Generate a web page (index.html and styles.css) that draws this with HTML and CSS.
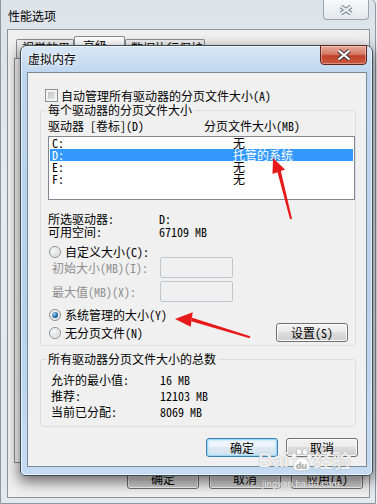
FILE: index.html
```html
<!DOCTYPE html>
<html lang="zh-CN">
<head>
    <meta charset="UTF-8">
    <meta name="viewport" content="width=device-width, initial-scale=1.0">
    <title>虚拟内存</title>
    <link rel="stylesheet" href="styles.css">
</head>
<body>
    <div class="window perf">
        <div class="titlebar">
            <span class="title">性能选项</span>
            <div class="close plain">
                <svg width="14" height="10" viewBox="0 0 14 10">
                    <path class="x-edge" d="M2 1.5 L12 8.5 M12 1.5 L2 8.5"/>
                    <path class="x-fill light" d="M2 1.5 L12 8.5 M12 1.5 L2 8.5"/>
                </svg>
            </div>
        </div>
        <div class="client">
            <div class="tabs">
                <div class="tab tab-visual">视觉效果</div>
                <div class="tab active tab-adv">高级</div>
                <div class="tab tab-dep">数据执行保护</div>
            </div>
            <div class="tab-page"></div>
            <div class="footer">
                <button class="btn">确定</button>
                <button class="btn">取消</button>
                <button class="btn">应用(A)</button>
            </div>
        </div>
    </div>

    <div class="window dialog">
        <div class="titlebar">
            <span class="title">虚拟内存</span>
            <div class="close red">
                <svg width="16" height="12" viewBox="0 0 16 12">
                    <path class="x-edge" d="M2.5 1.5 L13.5 10.5 M13.5 1.5 L2.5 10.5"/>
                    <path class="x-fill" d="M2.5 1.5 L13.5 10.5 M13.5 1.5 L2.5 10.5"/>
                </svg>
            </div>
        </div>
        <div class="client">
            <label class="check-row"><span class="checkbox"></span>自动管理所有驱动器的分页文件大小(A)</label>

            <fieldset class="group first">
                <legend>每个驱动器的分页文件大小</legend>
                <div class="list-head">
                    <span class="head-drive">驱动器 [卷标](D)</span>
                    <span>分页文件大小(MB)</span>
                </div>
                <div class="listbox">
                    <div class="item"><span class="item-drive">C:</span><span>无</span></div>
                    <div class="item selected"><span class="item-drive">D:</span><span>托管的系统</span></div>
                    <div class="item"><span class="item-drive">E:</span><span>无</span></div>
                    <div class="item"><span class="item-drive">F:</span><span>无</span></div>
                </div>
                <div class="info first-info"><span class="info-key">所选驱动器:</span><span>D:</span></div>
                <div class="info"><span class="info-key">可用空间:</span><span>67109 MB</span></div>

                <div class="radio-row custom"><span class="radio"></span>自定义大小(C):</div>
                <div class="field-row first-field">
                    <span class="field-label">初始大小(MB)(I):</span>
                    <span class="input"></span>
                </div>
                <div class="field-row">
                    <span class="field-label">最大值(MB)(X):</span>
                    <span class="input"></span>
                </div>
                <div class="radio-row system"><span class="radio checked"></span>系统管理的大小(Y)</div>
                <div class="radio-row none">
                    <span class="radio"></span>无分页文件(N)
                    <button class="btn set">设置(S)</button>
                </div>
            </fieldset>

            <fieldset class="group second">
                <legend>所有驱动器分页文件大小的总数</legend>
                <div class="totals">
                    <div class="total"><span class="total-key">允许的最小值:</span><span>16 MB</span></div>
                    <div class="total"><span class="total-key">推荐:</span><span>12103 MB</span></div>
                    <div class="total"><span class="total-key">当前已分配:</span><span>8069 MB</span></div>
                </div>
            </fieldset>

            <div class="dialog-buttons">
                <button class="btn default">确定</button>
                <button class="btn">取消</button>
            </div>
        </div>
    </div>

    <svg class="arrows" width="377" height="504" viewBox="0 0 377 504">
        <polygon points="273,158 285,169.5 272.5,174" />
        <polygon points="277.3,171.4 280.7,170.6 292,218.8 290,219.2" />
        <polygon points="175,319 192.7,312.3 190.7,326.7" />
        <polygon points="192.2,317.8 250.3,336.3 249.7,338.3 191.2,321.2" />
    </svg>

    <div class="watermark">
        <div class="wm-logo">
            <span class="wm-bai">Bai</span>
            <svg class="wm-paw" width="24" height="24" viewBox="0 0 24 24">
                <ellipse cx="5" cy="8" rx="2.6" ry="3.2"/>
                <ellipse cx="10" cy="3.8" rx="2.6" ry="3.2"/>
                <ellipse cx="16" cy="4" rx="2.6" ry="3.2"/>
                <ellipse cx="20.5" cy="9" rx="2.6" ry="3.2"/>
                <path d="M12.5 9.5 C8 9.5 4 15 4 19 C4 22 7 23 12.5 23 C18 23 21 22 21 19 C21 15 17 9.5 12.5 9.5 Z"/>
                <text x="12.5" y="20.5" text-anchor="middle">du</text>
            </svg>
            <span class="wm-jy">经验</span>
        </div>
        <div class="wm-url">jingyan.baidu.com</div>
    </div>
</body>
</html>
```

FILE: styles.css
```css
* {
    box-sizing: border-box;
}

body {
    margin: 0;
    width: 377px;
    height: 504px;
    overflow: hidden;
    position: relative;
    background: #eef2f5;
    font-family: "Noto Sans CJK SC", sans-serif;
    font-size: 12px;
    line-height: 12px;
    color: #000;
    font-feature-settings: "hwid";
}

.window {
    position: absolute;
    display: flex;
    flex-direction: column;
}

.titlebar {
    display: flex;
    align-items: flex-start;
    flex-shrink: 0;
}

.close {
    display: flex;
    align-items: center;
    justify-content: center;
    width: 46px;
    height: 20px;
    border-radius: 0 0 4px 4px;
}

.x-edge {
    fill: none;
    stroke: #4a3a36;
    stroke-width: 4.2;
}

.x-fill {
    fill: none;
    stroke: #fff;
    stroke-width: 2.2;
}

.x-fill.light {
    stroke: #e9edf0;
}

.plain .x-edge {
    stroke: #6f7a84;
}

/* outer window: 性能选项 */
.perf {
    left: 0;
    top: -2px;
    width: 376px;
    height: 506px;
    padding: 0 5px 5px 6px;
    border: 1px solid #8b97a3;
    border-radius: 0 7px 0 0;
    background: linear-gradient(to bottom, #dce3e9, #e8ecf0 40%, #e4e9ee);
}

.perf .titlebar {
    height: 30px;
}

.perf .title {
    margin: 11px 0 0 1px;
}

.close.plain {
    margin: 1px 1px 0 auto;
    border: 1px solid #9aa4ae;
    border-top: none;
    background: linear-gradient(to bottom, #f7f9fb, #e4e8ec);
}

.perf .client {
    flex: 1;
    display: flex;
    flex-direction: column;
    border: 1px solid #8f9498;
    background: #f0f0f0;
}

.tabs {
    display: flex;
    align-items: flex-end;
    height: 28px;
    padding: 6px 0 0 8px;
    flex-shrink: 0;
}

.tab {
    height: 19px;
    padding: 2px 0 0 5px;
    border: 1px solid #898c95;
    border-bottom: none;
    border-radius: 2px 2px 0 0;
    background: linear-gradient(to bottom, #f3f3f3, #e2e2e2);
}

.tab.active {
    height: 22px;
    padding: 3px 0 0 8px;
    background: #fff;
}

.tab-visual { width: 58px; }
.tab-adv { width: 51px; }
.tab-dep { width: 80px; }

.tab-page {
    flex: 1;
    margin: 0 6px;
    border: 1px solid #898c95;
    background: #fbfbfb;
}

.footer {
    display: flex;
    justify-content: flex-end;
    gap: 10px;
    padding: 5px 6px 8px 0;
    flex-shrink: 0;
}

.footer .btn {
    height: 21px;
}

/* dialog: 虚拟内存 */
.dialog {
    left: 20px;
    top: 45px;
    width: 353px;
    height: 431px;
    padding: 0 5px 8px 6px;
    border: 1px solid #3f4b57;
    border-radius: 7px 7px 5px 5px;
    background: linear-gradient(to bottom, #d8e7f6 0, #bed6ef 26px, #b8d2ee 60%, #c4dbf2 100%);
    box-shadow: 0 5px 14px 1px rgba(0, 0, 0, 0.55), inset 0 0 0 1px rgba(255, 255, 255, 0.65);
}

.dialog .titlebar {
    height: 26px;
}

.dialog .title {
    margin: 7px 0 0 1px;
    text-shadow: 0 0 6px #fff, 0 0 3px #fff;
}

.close.red {
    margin: -1px 0 0 auto;
    width: 47px;
    border: 1px solid #5d251d;
    background: linear-gradient(to bottom, #e9a99a 0%, #d67a66 45%, #c1412b 55%, #cc5a3f 100%);
    box-shadow: inset 0 0 0 1px rgba(255, 255, 255, 0.35);
}

.dialog .client {
    flex: 1;
    border: 1px solid #7c8894;
    background: #f0f0f0;
}

.check-row {
    display: flex;
    align-items: center;
    gap: 3px;
    height: 13px;
    margin: 16px 0 0 17px;
}

.checkbox {
    width: 13px;
    height: 13px;
    flex-shrink: 0;
    border: 1px solid #8e8f8f;
    background: linear-gradient(135deg, #b6bbc1, #eeeeee);
    box-shadow: inset 0 0 0 2px #f4f4f4;
}

.group {
    margin: 0 0 0 12px;
    width: 316px;
    min-inline-size: 0;
    padding: 0 0 3px 7px;
    border: 1px solid #d5dfe5;
    border-radius: 3px;
}

.group legend {
    margin-left: -2px;
    padding: 0 2px;
    line-height: 12px;
}

.group.first {
    margin-top: 2px;
}

.group.second {
    margin-top: 7px;
    padding-bottom: 6px;
}

.list-head {
    display: flex;
    height: 12px;
    margin-top: 4px;
}

.head-drive {
    width: 156px;
}

.listbox {
    width: 307px;
    height: 64px;
    margin-top: 4px;
    padding: 0 1px;
    border: 1px solid #828790;
    background: #fff;
}

.item {
    display: flex;
    height: 12px;
    padding-left: 2px;
}

.item-drive {
    width: 181px;
}

.item.selected {
    background: #3399ff;
    color: #fff;
}

.info {
    display: flex;
    height: 13px;
    line-height: 13px;
}

.info.first-info {
    margin-top: 12px;
}

.info-key {
    width: 111px;
}

.radio-row {
    display: flex;
    align-items: center;
    gap: 4px;
    height: 12px;
    padding-left: 1px;
}

.radio-row.custom {
    margin-top: 8px;
}

.radio-row.system {
    margin-top: 7px;
}

.radio-row.none {
    height: 19px;
    margin-top: 2px;
}

.radio {
    display: flex;
    align-items: center;
    justify-content: center;
    width: 12px;
    height: 12px;
    flex-shrink: 0;
    border: 1px solid #8e8f8f;
    border-radius: 50%;
    background: radial-gradient(circle at 35% 35%, #fafafa, #cfd2d6 85%);
    box-shadow: inset 0 0 0 1px #f6f6f6;
}

.radio.checked::after {
    content: "";
    width: 6px;
    height: 6px;
    border-radius: 50%;
    background: radial-gradient(circle at 35% 35%, #a6dcf8, #1e6aa8 55%, #0d3d6a);
}

.field-row {
    display: flex;
    align-items: center;
    height: 21px;
    margin-top: 3px;
    padding-left: 4px;
    color: #8d8d8d;
}

.field-row.first-field {
    margin-top: -1px;
}

.field-label {
    width: 108px;
}

.input {
    width: 73px;
    height: 21px;
    border: 1px solid #c2c6ca;
    border-radius: 2px;
    background: #f0f0f0;
}

.btn {
    width: 72px;
    height: 19px;
    padding: 0;
    font: inherit;
    line-height: 12px;
    color: #000;
    border: 1px solid #707070;
    border-radius: 3px;
    background: linear-gradient(to bottom, #f2f2f2 0%, #ebebeb 49%, #dddddd 50%, #cfcfcf 100%);
    box-shadow: inset 0 0 0 1px #fcfcfc;
}

.btn.set {
    margin: 0 7px 0 auto;
}

.btn.default {
    border-color: #3c7fb1;
    background: linear-gradient(to bottom, #f3f9fd 0%, #eaf3f9 49%, #dde9f1 50%, #d2e2ec 100%);
    box-shadow: inset 0 0 0 1px #9fd8f6, inset 0 0 2px 2px rgba(190, 230, 250, 0.7);
}

.totals {
    margin-top: 7px;
    padding-left: 3px;
}

.total {
    display: flex;
    height: 16px;
    line-height: 16px;
}

.total-key {
    width: 109px;
}

.dialog-buttons {
    display: flex;
    justify-content: flex-end;
    gap: 8px;
    margin-top: 11px;
    padding-right: 8px;
}

/* overlays */
.arrows {
    position: absolute;
    left: 0;
    top: 0;
    pointer-events: none;
}

.arrows polygon {
    fill: #e8191a;
}

.watermark {
    position: absolute;
    left: 258px;
    top: 448px;
    color: rgba(255, 255, 255, 0.85);
    text-shadow: 0 0 1px rgba(110, 110, 110, 0.7);
    pointer-events: none;
}

.wm-logo {
    display: flex;
    align-items: center;
    height: 24px;
}

.wm-bai {
    font-family: "Liberation Sans", sans-serif;
    font-weight: bold;
    font-size: 20px;
    line-height: 20px;
}

.wm-paw {
    fill: rgba(255, 255, 255, 0.85);
    stroke: rgba(120, 120, 120, 0.5);
    stroke-width: 0.6;
}

.wm-paw text {
    font-family: "Liberation Sans", sans-serif;
    font-weight: bold;
    font-size: 9px;
    fill: rgba(150, 150, 150, 0.6);
    stroke: none;
}

.wm-jy {
    font-weight: bold;
    font-size: 19px;
    line-height: 20px;
}

.wm-url {
    margin: 8px 0 0 4px;
    font-family: "Liberation Sans", sans-serif;
    font-size: 9px;
    line-height: 9px;
    letter-spacing: 0.3px;
}
```
